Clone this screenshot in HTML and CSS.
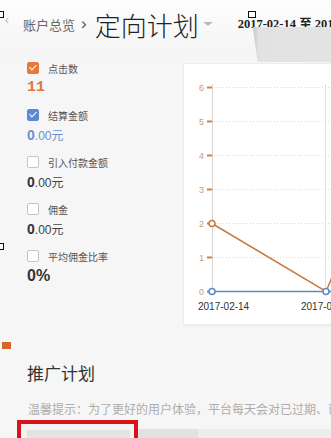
FILE: index.html
```html
<!DOCTYPE html>
<html lang="zh-CN">
<head>
	<meta charset="UTF-8">
	<title>定向计划</title>
	<link rel="stylesheet" href="styles.css">
</head>
<body>
	<span class="handle handle-a"></span>
	<span class="handle handle-b"></span>
	<span class="handle handle-c"></span>

	<header class="head">
		<span class="back">‹</span>
		<span class="crumb">账户总览</span>
		<span class="sep">›</span>
		<h1 class="title">定向计划</h1>
		<span class="caret"></span>
		<div class="range">
			<div class="date">2017-02-14 至 2017-02-20</div>
			<div class="picker"></div>
		</div>
	</header>

	<section class="main">
		<ul class="metrics">
			<li>
				<label class="check on-orange"><i></i>点击数</label>
				<p class="num click">11</p>
			</li>
			<li>
				<label class="check on-blue"><i></i>结算金额</label>
				<p class="num money"><b>0</b>.00元</p>
			</li>
			<li>
				<label class="check"><i></i>引入付款金额</label>
				<p class="num"><b>0</b>.00元</p>
			</li>
			<li>
				<label class="check"><i></i>佣金</label>
				<p class="num"><b>0</b>.00元</p>
			</li>
			<li>
				<label class="check"><i></i>平均佣金比率</label>
				<p class="num"><b class="big">0%</b></p>
			</li>
		</ul>

		<div class="chart">
			<svg width="170" height="260" viewBox="0 0 170 260">
				<!-- 网格 -->
				<g stroke="#efd3bd" stroke-width="1" stroke-dasharray="1 2">
					<line x1="30" y1="23.5" x2="170" y2="23.5"/>
					<line x1="30" y1="57.5" x2="170" y2="57.5"/>
					<line x1="30" y1="91.5" x2="170" y2="91.5"/>
					<line x1="30" y1="125.5" x2="170" y2="125.5"/>
					<line x1="30" y1="159.5" x2="170" y2="159.5"/>
					<line x1="30" y1="193.5" x2="170" y2="193.5"/>
				</g>
				<line x1="28.5" y1="20" x2="28.5" y2="228" stroke="#d6d6d6"/>
				<line x1="141.5" y1="20" x2="141.5" y2="228" stroke="#e2e2e2"/>
				<g stroke="#c9824c" stroke-width="2">
					<line x1="23" y1="23.5" x2="28" y2="23.5"/>
					<line x1="23" y1="57.5" x2="28" y2="57.5"/>
					<line x1="23" y1="91.5" x2="28" y2="91.5"/>
					<line x1="23" y1="125.5" x2="28" y2="125.5"/>
					<line x1="23" y1="159.5" x2="28" y2="159.5"/>
					<line x1="23" y1="193.5" x2="28" y2="193.5"/>
				</g>
				<line x1="23" y1="227.5" x2="28" y2="227.5" stroke="#6f93c9" stroke-width="2"/>
				<g font-family="Liberation Sans, sans-serif" font-size="9" fill="#d19a70" text-anchor="end">
					<text x="20" y="26.5">6</text>
					<text x="20" y="60.5">5</text>
					<text x="20" y="94.5">4</text>
					<text x="20" y="128.5">3</text>
					<text x="20" y="162.5">2</text>
					<text x="20" y="196.5">1</text>
					<text x="20" y="230.5">0</text>
				</g>
				<!-- 数据 -->
				<polyline points="28,227.5 142,227.5 170,227.5" fill="none" stroke="#5f87c2" stroke-width="1.5"/>
				<polyline points="28,159.5 142,227.5 162,180" fill="none" stroke="#c97a3c" stroke-width="1.5"/>
				<circle cx="28" cy="159.5" r="3" fill="#fff" stroke="#c97a3c" stroke-width="1.5"/>
				<circle cx="28" cy="227.5" r="3" fill="#fff" stroke="#5f87c2" stroke-width="1.5"/>
				<circle cx="142" cy="227.5" r="3" fill="#fff" stroke="#5f87c2" stroke-width="1.5"/>
				<g font-family="Liberation Sans, sans-serif" font-size="10" fill="#333">
					<text x="14" y="246">2017-02-14</text>
					<text x="117" y="246">2017-02-20</text>
				</g>
			</svg>
		</div>
	</section>

	<div class="mark"></div>
	<h2 class="plan">推广计划</h2>
	<p class="tip">温馨提示：为了更好的用户体验，平台每天会对已过期、已停止的计划进行清理</p>
	<div class="tabs">
		<div class="tab"><div class="tab-in"></div></div>
		<div class="tab-bar"></div>
	</div>
</body>
</html>
```

FILE: styles.css
```css
html,body{
	overflow: hidden;
}
body{
	margin: 0;
	width: 331px;
	height: 438px;
	background-color: #f6f6f6;
	font-family: "Noto Sans CJK SC", sans-serif;
	color: #333;
	position: relative;
}
ul{
	list-style: none;
	padding: 0;
	margin: 0;
}
p,h1,h2{
	margin: 0;
	font-weight: normal;
}

	/* 截图上的选择框小方块 */
	.handle{
		position: absolute;
		width: 6px;
		height: 5px;
		border: 1px solid #111;
		background-color: #fff;
		z-index: 5;
	}
	.handle-a{
		left: -4px;
		top: 11px;
	}
	.handle-b{
		left: 248px;
		top: 11px;
	}
	.handle-c{
		left: -4px;
		top: 243px;
	}

	.head{
		display: flex;
		align-items: flex-start;
		height: 58px;
		background: linear-gradient(#fdfdfd, #f4f4f4);
		white-space: nowrap;
	}
	.back{
		width: 23px;
		padding-left: 5px;
		box-sizing: border-box;
		flex-shrink: 0;
		line-height: 40px;
		font-size: 12px;
		color: #bbb;
		font-family: "Liberation Sans", sans-serif;
	}
	.crumb{
		line-height: 50px;
		font-size: 13px;
		color: #666;
		flex-shrink: 0;
	}
	.sep{
		margin-left: 6px;
		line-height: 48px;
		font-size: 17px;
		color: #555;
		font-family: "Liberation Sans", sans-serif;
		flex-shrink: 0;
	}
	.title{
		margin-left: 8px;
		line-height: 50px;
		font-size: 26px;
		font-weight: 300;
		color: #222;
		flex-shrink: 0;
	}
	.caret{
		margin: 22px 0 0 4px;
		width: 0;
		height: 0;
		border-left: 5px solid transparent;
		border-right: 5px solid transparent;
		border-top: 4px solid #bbb;
		flex-shrink: 0;
	}
	.range{
		margin-left: 25px;
		padding-top: 17px;
		flex-shrink: 0;
	}
	.date{
		line-height: 14px;
		font-size: 12.5px;
		font-weight: bold;
		color: #222;
		font-family: "Liberation Serif", "Noto Sans CJK SC", serif;
	}
	.picker{
		margin: -4px 0 0 15px;
		width: 100px;
		height: 35px;
		background: linear-gradient(90deg, #c9c9c9, #e2e2e2 6px, #e4e4e4);
		clip-path: polygon(0 0, 100% 0, 100% 100%, 5px 100%);
	}

	.main{
		display: flex;
		align-items: flex-start;
	}
	.metrics{
		width: 183px;
		padding-left: 27px;
		box-sizing: border-box;
		flex-shrink: 0;
	}
	.metrics li{
		height: 40px;
		margin-bottom: 7px;
	}
	.check{
		display: flex;
		align-items: center;
		height: 20px;
		font-size: 10px;
		color: #555;
	}
	.check i{
		width: 12px;
		height: 12px;
		margin-right: 9px;
		border: 1px solid #c4c4c4;
		border-radius: 2px;
		box-sizing: border-box;
		background-color: #fff;
		position: relative;
	}
	.on-orange i{
		background-color: #e8793a;
		border-color: #e8793a;
	}
	.on-blue i{
		background-color: #5d88d6;
		border-color: #5d88d6;
	}
	.on-orange i:after,
	.on-blue i:after{
		content: "";
		position: absolute;
		left: 3px;
		top: 0px;
		width: 3px;
		height: 6px;
		border-right: 1.5px solid #fff;
		border-bottom: 1.5px solid #fff;
		transform: rotate(45deg);
	}
	.num{
		line-height: 20px;
		font-size: 12px;
		color: #444;
		font-family: "Liberation Sans", "Noto Sans CJK SC", sans-serif;
	}
	.num b{
		font-size: 14px;
		color: #333;
	}
	.num .big{
		font-size: 16px;
	}
	.click{
		font-family: "Liberation Mono", monospace;
		font-weight: bold;
		font-size: 15px;
		color: #e0773a;
	}
	.money,
	.money b{
		color: #6e8fd0;
	}

	.chart{
		margin-top: 5px;
		width: 172px;
		height: 262px;
		flex-shrink: 0;
		background-color: #fff;
		border: 1px solid #ececec;
		box-sizing: border-box;
		box-shadow: 0 1px 2px rgba(0,0,0,0.05);
	}
	.chart svg{
		display: block;
	}

	.mark{
		margin: 17px 0 0 2px;
		width: 9px;
		height: 7px;
		background-color: #d8642c;
	}
	.plan{
		margin: 12px 0 0 27px;
		line-height: 24px;
		font-size: 17px;
		color: #333;
	}
	.tip{
		margin: 16px 0 0 28px;
		line-height: 16px;
		font-size: 12px;
		color: #adadad;
		white-space: nowrap;
	}
	.tabs{
		display: flex;
		align-items: flex-start;
		margin-top: 3px;
	}
	.tab{
		margin-left: 17px;
		width: 121px;
		height: 30px;
		border: 4px solid #d7141a;
		box-sizing: border-box;
		padding: 6px 4px 0 6px;
		background-color: #f3f3f3;
		flex-shrink: 0;
	}
	.tab-in{
		height: 30px;
		background-color: #e3e3e3;
	}
	.tab-bar{
		flex: 1;
		margin-top: 9px;
		height: 20px;
		background: linear-gradient(90deg, #e2e2e2 60px, #ececec 60px);
	}
```
